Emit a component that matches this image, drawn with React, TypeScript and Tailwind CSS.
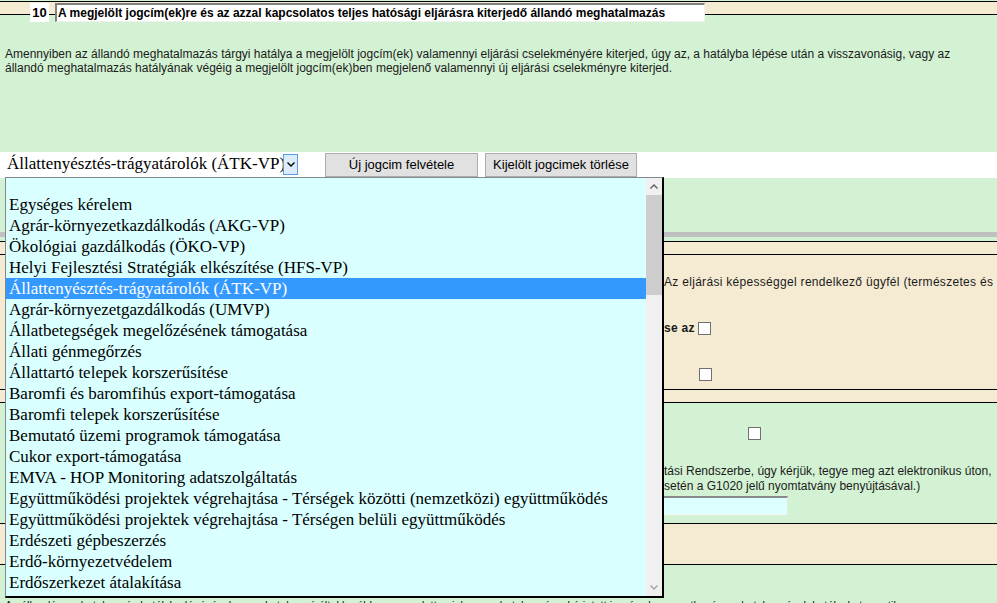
const jogcimek = [
	"",
	"Egységes kérelem",
	"Agrár-környezetkazdálkodás (AKG-VP)",
	"Ökológiai gazdálkodás (ÖKO-VP)",
	"Helyi Fejlesztési Stratégiák elkészítése (HFS-VP)",
	"Állattenyésztés-trágyatárolók (ÁTK-VP)",
	"Agrár-környezetgazdálkodás (UMVP)",
	"Állatbetegségek megelőzésének támogatása",
	"Állati génmegőrzés",
	"Állattartó telepek korszerűsítése",
	"Baromfi és baromfihús export-támogatása",
	"Baromfi telepek korszerűsítése",
	"Bemutató üzemi programok támogatása",
	"Cukor export-támogatása",
	"EMVA - HOP Monitoring adatszolgáltatás",
	"Együttműködési projektek végrehajtása - Térségek közötti (nemzetközi) együttműködés",
	"Együttműködési projektek végrehajtása - Térségen belüli együttműködés",
	"Erdészeti gépbeszerzés",
	"Erdő-környezetvédelem",
	"Erdőszerkezet átalakítása",
]

const selected = "Állattenyésztés-trágyatárolók (ÁTK-VP)"

function Chevron({ up, color }: { up?: boolean; color: string }) {
	return (
		<svg width="8" height="5" viewBox="0 0 8 5">
			<polyline
				points={up ? "0.5,4.5 4,1 7.5,4.5" : "0.5,0.5 4,4 7.5,0.5"}
				fill="none"
				stroke={color}
				strokeWidth="1.4"
			/>
		</svg>
	)
}

function Band({ className = "" }: { className?: string }) {
	return <div className={`h-[14px] border-y border-black bg-[#f5ebd3] ${className}`} />
}

function Checkbox() {
	return <span className="inline-block h-[13px] w-[13px] shrink-0 border border-[#707070] bg-white" />
}

export default function App() {
	return (
		<div className="relative h-[603px] w-full overflow-hidden bg-[#d3f1d3] font-['Liberation_Sans',Arial,sans-serif] text-[12px] text-[#1b1b1b]">
			{/* szakasz fejléc */}
			<Band className="mt-px" />
			<div className="relative -mt-[12px] flex h-[19px] pl-[30px]">
				<div className="h-[19px] w-[19px] bg-white text-center text-[13px] font-bold leading-[19px] text-black">10</div>
				<div className="ml-[6px] h-[19px] w-[650px] overflow-hidden whitespace-nowrap border-t-2 border-l-2 border-r border-b border-t-[#808080] border-l-[#808080] border-r-[#f0f0f0] border-b-[#f0f0f0] bg-white pl-[1px] text-[12px] font-bold leading-[16px] text-black">
					A megjelölt jogcím(ek)re és az azzal kapcsolatos teljes hatósági eljárásra kiterjedő állandó meghatalmazás
				</div>
			</div>

			<p className="mt-[25px] pl-[5px] leading-[14px]">
				Amennyiben az állandó meghatalmazás tárgyi hatálya a megjelölt jogcím(ek) valamennyi eljárási cselekményére kiterjed, úgy az, a hatályba lépése után a visszavonásig, vagy az
				<br />
				állandó meghatalmazás hatályának végéig a megjelölt jogcím(ek)ben megjelenő valamennyi új eljárási cselekményre kiterjed.
			</p>

			{/* jogcím választó */}
			<div className="mt-[77px] flex h-[26px] items-start bg-white pl-[5px]">
				<div className="mt-px flex h-[22px] w-[295px] items-center bg-white">
					<span className="w-[280px] overflow-hidden whitespace-nowrap pl-[2px] font-['Liberation_Serif','Times_New_Roman',serif] text-[17px] leading-[22px] text-black">
						{selected}
					</span>
					<span className="-ml-[2px] flex h-[21px] w-[15px] items-center justify-center border border-[#569de5] bg-[#dcecfc]">
						<Chevron color="#000" />
					</span>
				</div>
				<button className="mt-px ml-[25px] h-[24px] w-[153px] border border-[#adadad] bg-[#e1e1e1] text-[13px] text-black">Új jogcim felvétele</button>
				<button className="mt-px ml-[7px] h-[24px] w-[152px] border border-[#adadad] bg-[#e1e1e1] text-[13px] text-black">Kijelölt jogcimek törlése</button>
			</div>

			<div className="mt-[54px] h-[5px] bg-[#c0c0c0]" />
			<Band className="mt-[4px]" />

			{/* ügyfél adatai */}
			<div className="flex h-[134px] flex-col bg-[#f5ebd3]">
				<div className="mt-[20px] flex leading-[14px]">
					<div className="w-[664px] shrink-0" />
					<div className="whitespace-nowrap tracking-[0.3px]">Az eljárási képességgel rendelkező ügyfél (természetes és</div>
				</div>
				<div className="mt-[32px] flex items-center leading-[14px]">
					<div className="w-[664px] shrink-0" />
					<span className="font-bold tracking-[0.3px]">se az</span>
					<span className="ml-[3px] flex">
						<Checkbox />
					</span>
				</div>
				<div className="mt-[32px] flex h-[14px] items-center">
					<div className="w-[699px] shrink-0" />
					<Checkbox />
				</div>
			</div>

			<Band />

			{/* ügyfél-kapu */}
			<div className="flex h-[120px] flex-col">
				<div className="mt-[24px] flex">
					<div className="w-[748px] shrink-0" />
					<Checkbox />
				</div>
				<div className="mt-[24px] flex leading-[15px]">
					<div className="w-[664px] shrink-0" />
					<div className="whitespace-nowrap">
						tási Rendszerbe, úgy kérjük, tegye meg azt elektronikus úton,
						<br />
						setén a G1020 jelű nyomtatvány benyújtásával.)
					</div>
				</div>
				<div className="mt-[2px] flex">
					<div className="w-[664px] shrink-0" />
					<div className="h-[19px] w-[124px] border-t-2 border-r border-b border-t-[#8a8a8a] border-r-[#e6e6e6] border-b-[#f4f4f4] bg-[#dcffff]" />
				</div>
			</div>

			<div className="h-[42px] border-y border-black bg-[#f5ebd3]" />

			<p className="mt-[34px] whitespace-nowrap pl-[5px] text-[11px] leading-[13px]">
				Az állandó meghatalmazás hatályba lépésével a meghatalmazó által korábban megadott, a jelen meghatalmazással érintett jogcímekre vonatkozó meghatalmazások hatályukat vesztik.
			</p>

			{/* lenyíló lista */}
			<div className="absolute top-[177px] left-[5px] flex h-[421px] w-[659px] border-t border-l border-r-2 border-b-2 border-t-[#828790] border-l-[#828790] border-r-black border-b-black">
				<ul className="flex-1 overflow-hidden bg-[#d9ffff] font-['Liberation_Serif','Times_New_Roman',serif] text-[17px] text-black">
					{jogcimek.map((j, i) =>
						i === 0 ? (
							<li key="ures" className="h-[16px]" />
						) : (
							<li
								key={j}
								className={`h-[21px] whitespace-nowrap pl-[3px] leading-[21px] ${j === selected ? "bg-[#3399ff] text-white" : ""}`}
							>
								{j}
							</li>
						),
					)}
				</ul>
				<div className="flex w-[16px] flex-col bg-[#f0f0f0]">
					<div className="flex h-[17px] items-center justify-center">
						<Chevron up color="#606060" />
					</div>
					<div className="h-[100px] bg-[#cdcdcd]" />
					<div className="flex-1" />
					<div className="flex h-[17px] items-center justify-center">
						<Chevron color="#a3a3a3" />
					</div>
				</div>
			</div>
		</div>
	)
}
